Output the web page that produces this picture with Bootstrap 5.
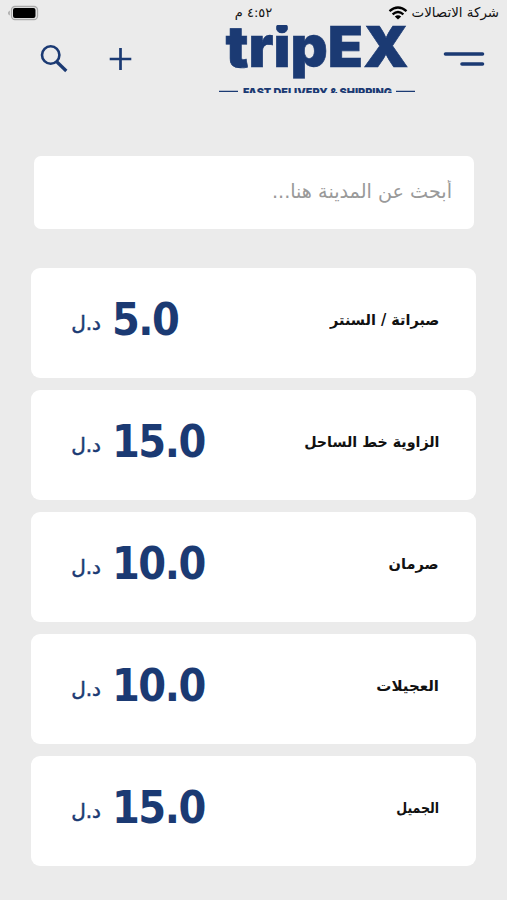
<!DOCTYPE html>
<html lang="ar" dir="rtl">
<head>
<meta charset="utf-8">
<meta name="viewport" content="width=device-width, initial-scale=1">
<title>tripEX</title>
<link rel="stylesheet" href="https://cdn.jsdelivr.net/npm/bootstrap@5.3.0/dist/css/bootstrap.min.css">
<style>
body{background:#ebebeb;font-family:"DejaVu Sans","Noto Sans",sans-serif;color:#111;height:900px;overflow:hidden}
svg{display:block}
.status-bar{height:25px;padding:0 8px;font-size:13px}
.status-side{width:200px}
.carrier{font-size:13.4px;padding-top:2px}
.top-bar{height:68px;padding:0 22px 0 38px}
.tool-icons{gap:37px}
.brand-group{gap:28px}
.search-box{margin:63px 33px 0 34px;height:73px;border-radius:7px;background:#fff;padding:0 22px}
.search-box input{color:#999;font-size:19.2px;height:71px}
.search-box input::placeholder{color:#999;opacity:1}
.city-list{margin:39.4px 31px 0;gap:12px}
.city{height:110px;border:0;border-radius:9px;background:#fff;padding:0 37px 7px 41px}
.city-name{font-weight:700;font-size:15px;transform-origin:right center;white-space:nowrap}
.city:nth-child(1) .city-name{transform:scaleX(.965)}
.city:nth-child(2) .city-name{transform:scaleX(.95)}
.city:nth-child(3) .city-name{transform:scaleX(.97)}
.city:nth-child(5) .city-name{transform:scaleX(.84)}
.price{color:#1b3a73;gap:11px}
.amount{font:700 44.5px/50px "DejaVu Sans Condensed","DejaVu Sans",sans-serif;font-stretch:condensed;letter-spacing:-1.5px}
.currency{font-size:20px;width:29px;white-space:nowrap;padding-top:6px;-webkit-text-stroke:.5px #1b3a73}
</style>
<script src="https://cdn.jsdelivr.net/npm/bootstrap@5.3.0/dist/js/bootstrap.bundle.min.js"></script>
</head>
<body>
<div class="status-bar d-flex align-items-center justify-content-between">
  <div class="status-side carrier d-flex align-items-center gap-1">
    <span>شركة الاتصالات</span>
    <svg width="20" height="14" viewBox="0 0 20 14" fill="none" stroke="#000" stroke-width="2.3"><path d="M1.500 5.200Q10-2.200 18.500 5.200M4.600 8.300Q10 3.600 15.400 8.300"/><path d="M10 13.500L6.800 10.500Q10 8 13.200 10.500Z" fill="#000" stroke="none"/></svg>
  </div>
  <span>٤:٥٢ م</span>
  <div class="status-side" dir="ltr"><svg width="31" height="16" viewBox="0 0 31 16"><rect x="3.500" y="1.500" width="26" height="13" rx="3.500" fill="none" stroke="#aaa" stroke-width="1.300"/><rect x="5" y="3" width="22.500" height="10" rx="2"/><path d="M1.800 5.500v5Q0 9.500 0 8t1.800-2.500Z" fill="#aaa"/></svg></div>
</div>
<header class="top-bar d-flex align-items-center justify-content-between" dir="ltr">
  <div class="tool-icons d-flex align-items-center">
    <svg width="32" height="32" viewBox="0 0 32 32" fill="none" stroke="#1b3a73"><circle cx="12.700" cy="12" r="8.700" stroke-width="2.600"/><path d="M18.500 18.500L28.300 28" stroke-width="3.200"/></svg>
    <svg width="26" height="26" viewBox="0 0 26 26" stroke="#1b3a73" stroke-width="2.700"><path d="M13.500 2v22M2.700 13h21.600"/></svg>
  </div>
  <div class="brand-group d-flex align-items-center">
    <svg width="197" height="68" viewBox="0 0 197 68" fill="#1b3a73" stroke="#1b3a73"><text x="7.500" y="42" font-family="Inter,sans-serif" font-weight="900" font-size="57" textLength="183" lengthAdjust="spacingAndGlyphs" stroke-width=".6">tripEX</text><path d="M1 66.300h19M178 66.300h19" stroke-width="1.300"/><text x="25" y="70.500" font-family="Inter,sans-serif" font-weight="900" font-size="11" textLength="149" lengthAdjust="spacingAndGlyphs" stroke="none">FAST DELIVERY &amp; SHIPPING</text></svg>
    <svg width="42" height="20" viewBox="0 0 42 20" stroke="#1b3a73" stroke-width="3.600" stroke-linecap="round"><path d="M2.500 5h37M19 15h20.500"/></svg>
  </div>
</header>
<div class="search-box"><input class="form-control border-0 bg-transparent shadow-none p-0" type="text" placeholder="أبحث عن المدينة هنا..."></div>
<main class="city-list d-flex flex-column">
  <div class="city card flex-row align-items-center justify-content-between"><span class="city-name">صبراتة / السنتر</span><div class="price d-flex align-items-center" dir="ltr"><span class="currency" dir="rtl">د.ل</span><span class="amount">5.0</span></div></div>
  <div class="city card flex-row align-items-center justify-content-between"><span class="city-name">الزاوية خط الساحل</span><div class="price d-flex align-items-center" dir="ltr"><span class="currency" dir="rtl">د.ل</span><span class="amount">15.0</span></div></div>
  <div class="city card flex-row align-items-center justify-content-between"><span class="city-name">صرمان</span><div class="price d-flex align-items-center" dir="ltr"><span class="currency" dir="rtl">د.ل</span><span class="amount">10.0</span></div></div>
  <div class="city card flex-row align-items-center justify-content-between"><span class="city-name">العجيلات</span><div class="price d-flex align-items-center" dir="ltr"><span class="currency" dir="rtl">د.ل</span><span class="amount">10.0</span></div></div>
  <div class="city card flex-row align-items-center justify-content-between"><span class="city-name">الجميل</span><div class="price d-flex align-items-center" dir="ltr"><span class="currency" dir="rtl">د.ل</span><span class="amount">15.0</span></div></div>
</main>
</body>
</html>
